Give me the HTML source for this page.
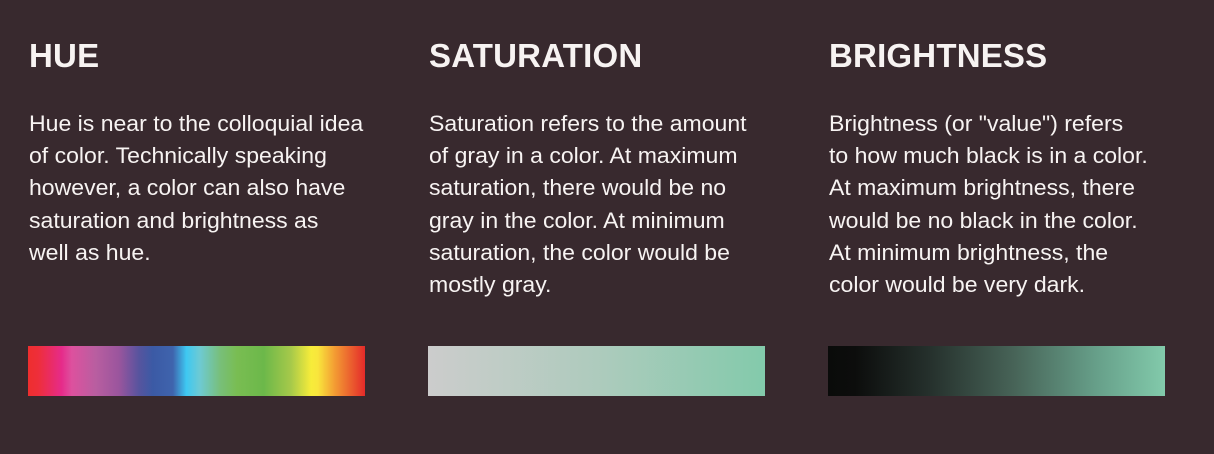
<!DOCTYPE html>
<html><head><meta charset="utf-8"><style>
html,body{margin:0;padding:0;}
body{width:1214px;height:454px;background:#38292e;color:#f7f3f2;font-family:"Liberation Sans",sans-serif;position:relative;overflow:hidden;}
.col{position:absolute;top:0;width:380px;}
h2{position:absolute;top:38px;left:1px;margin:0;font-size:33px;font-weight:bold;line-height:36px;white-space:nowrap;letter-spacing:0.2px;}
.p{position:absolute;top:108px;left:1px;font-size:22px;line-height:32.2px;white-space:nowrap;transform:scaleX(1.047);transform-origin:0 0;}
.bar{position:absolute;top:346px;left:0;width:337px;height:50px;}
</style></head><body>
<div class="col" style="left:28px">
<h2>HUE</h2>
<div class="p">Hue is near to the colloquial idea<br>of color. Technically speaking<br>however, a color can also have<br>saturation and brightness as<br>well as hue.</div>
<div class="bar" style="background:linear-gradient(90deg,#ee2e2e 0%,#ee2e3a 3%,#e62b8a 10%,#dd519e 13%,#b95ea0 20%,#9a559d 27%,#56549e 33%,#3b5aa5 37%,#3f64ad 43%,#3ec8f2 47%,#6ecad3 51%,#78bf7a 57%,#79bd52 62%,#6cb84a 70%,#a6c94a 78%,#f7ec3a 84%,#f9e63c 86%,#f39c33 91%,#e42a2a 100%)"></div>
</div>
<div class="col" style="left:428px">
<h2>SATURATION</h2>
<div class="p">Saturation refers to the amount<br>of gray in a color. At maximum<br>saturation, there would be no<br>gray in the color. At minimum<br>saturation, the color would be<br>mostly gray.</div>
<div class="bar" style="background:linear-gradient(90deg,#cccccc 0%,#aecbbd 50%,#83caab 100%)"></div>
</div>
<div class="col" style="left:828px">
<h2>BRIGHTNESS</h2>
<div class="p">Brightness (or "value") refers<br>to how much black is in a color.<br>At maximum brightness, there<br>would be no black in the color.<br>At minimum brightness, the<br>color would be very dark.</div>
<div class="bar" style="background:linear-gradient(90deg,#0a0b0a 0%,#0c0d0c 8%,#25302c 30%,#476357 55%,#67a08a 80%,#82caab 100%)"></div>
</div>
</body></html>
